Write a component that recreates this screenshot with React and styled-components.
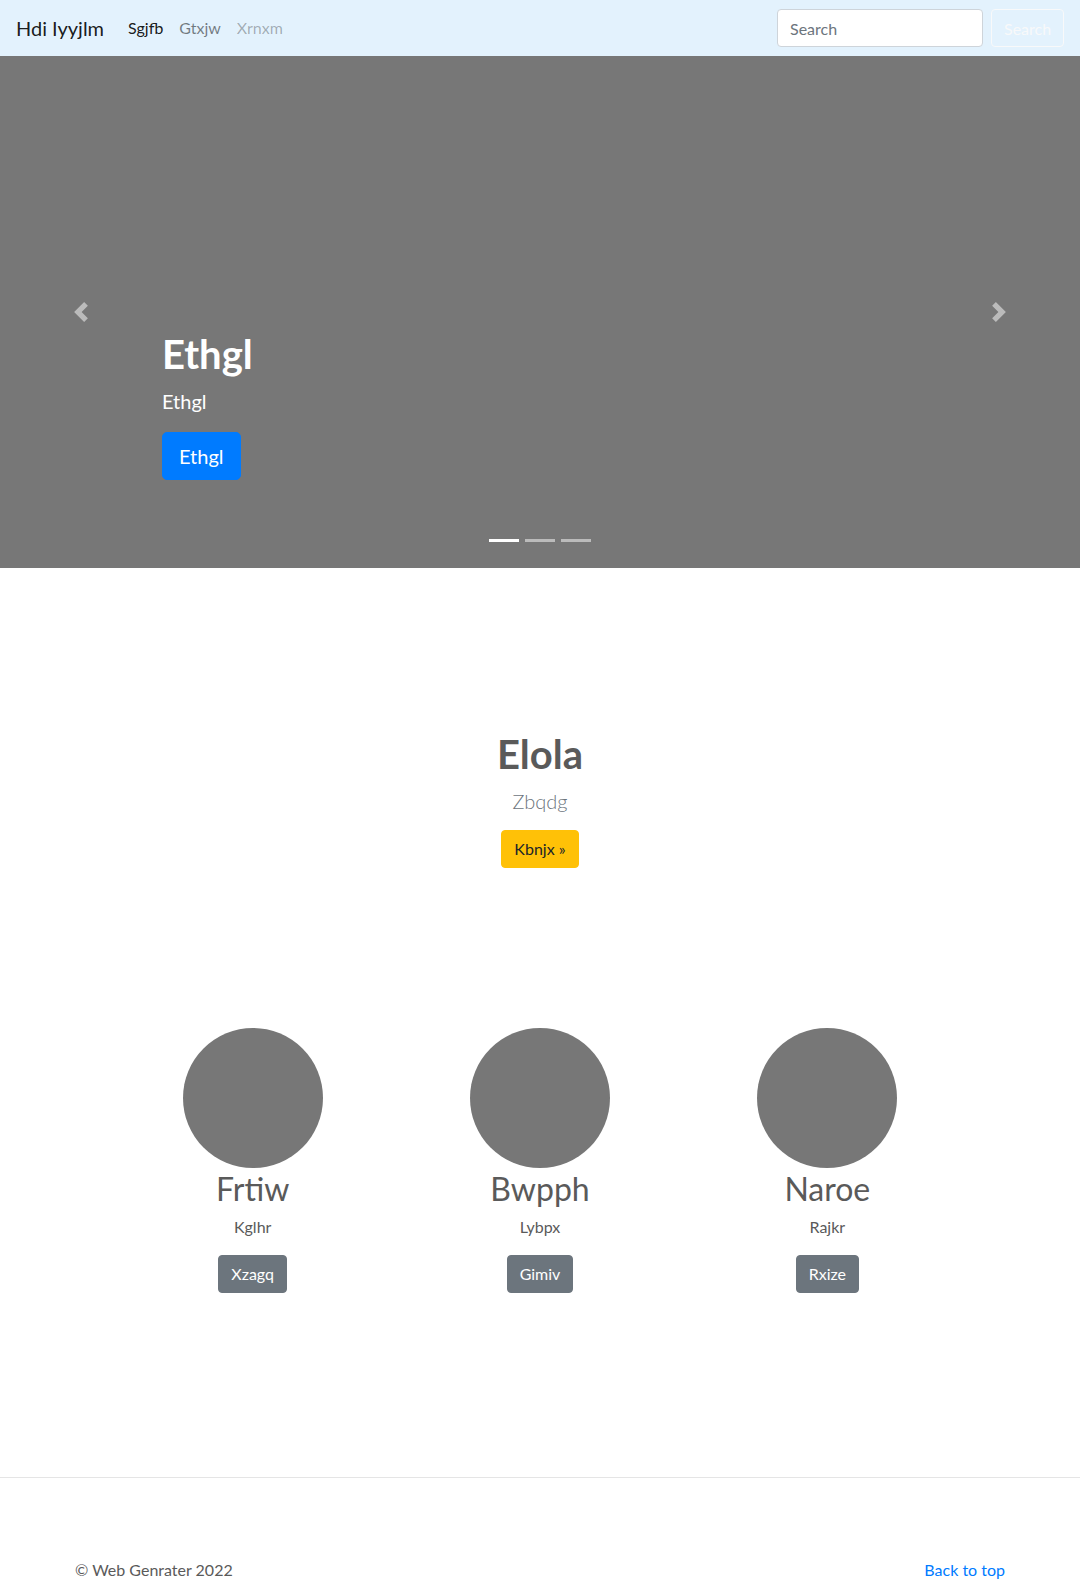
import React from "react";
import styled, { createGlobalStyle } from "styled-components";

const GlobalStyle = createGlobalStyle`
  html, body { margin: 0; padding: 0; }
  body {
    font-family: "Lato", "Open Sans", "Noto Sans", sans-serif;
    font-size: 16px;
    line-height: 1.5;
    color: #5a5a5a;
    background: #fff;
  }
  * { box-sizing: border-box; }
`;

const Navbar = styled.nav`
  height: 56px;
  background: #e3f2fd;
  padding: 8px 16px;
  display: flex;
  align-items: center;
`;

const Brand = styled.a`
  font-size: 20px;
  line-height: 30px;
  padding: 5px 0;
  margin-right: 16px;
  color: rgba(0, 0, 0, 0.9);
  text-decoration: none;
`;

const NavList = styled.div`
  display: flex;
  align-items: center;
`;

const NavLink = styled.a`
  padding: 8px;
  font-size: 16px;
  line-height: 24px;
  text-decoration: none;
  color: ${(p) =>
    p.$state === "active"
      ? "rgba(0,0,0,0.9)"
      : p.$state === "disabled"
      ? "rgba(0,0,0,0.3)"
      : "rgba(0,0,0,0.5)"};
`;

const SearchForm = styled.form`
  margin-left: auto;
  display: flex;
  align-items: center;
  gap: 8px;
`;

const SearchInput = styled.input`
  width: 206px;
  height: 38px;
  padding: 6px 12px;
  font-family: inherit;
  font-size: 16px;
  color: #495057;
  background: #fff;
  border: 1px solid #ced4da;
  border-radius: 4px;
  outline: none;
  &::placeholder { color: #6c757d; }
`;

const OutlineButton = styled.button`
  width: 73px;
  height: 38px;
  padding: 6px 12px;
  font-family: inherit;
  font-size: 16px;
  color: #f8f9fa;
  background: transparent;
  border: 1px solid #f8f9fa;
  border-radius: 4px;
`;

const Carousel = styled.div`
  position: relative;
  height: 512px;
  background: #777;
  overflow: hidden;
`;

const Caption = styled.div`
  position: absolute;
  left: 15%;
  right: 15%;
  bottom: 48px;
  padding: 20px 0 40px;
  color: #fff;
  text-align: left;
`;

const CaptionTitle = styled.h1`
  margin: 0 0 8px;
  font-size: 40px;
  line-height: 1.2;
  font-weight: 700;
`;

const CaptionText = styled.p`
  margin: 0 0 16px;
  font-size: 20px;
  line-height: 1.5;
`;

const PrimaryLgButton = styled.a`
  display: inline-block;
  padding: 8px 16px;
  font-size: 20px;
  line-height: 30px;
  color: #fff;
  background: #007bff;
  border: 1px solid #007bff;
  border-radius: 5px;
  text-decoration: none;
`;

const Control = styled.a`
  position: absolute;
  top: 0;
  bottom: 0;
  ${(p) => (p.$side === "left" ? "left: 0;" : "right: 0;")}
  width: 15%;
  display: flex;
  align-items: center;
  justify-content: center;
  opacity: 0.5;
`;

const Indicators = styled.ol`
  position: absolute;
  left: 15%;
  right: 15%;
  bottom: 26px;
  margin: 0;
  padding: 0;
  list-style: none;
  display: flex;
  justify-content: center;
  gap: 6px;
`;

const Indicator = styled.li`
  width: 30px;
  height: 3px;
  background: #fff;
  opacity: ${(p) => (p.$active ? 1 : 0.5)};
`;

const Intro = styled.section`
  padding-top: 162px;
  text-align: center;
`;

const IntroTitle = styled.h1`
  margin: 0 0 8px;
  font-size: 40px;
  line-height: 1.2;
  font-weight: 700;
  color: #5a5a5a;
`;

const Lead = styled.p`
  margin: 0 0 14px;
  font-size: 20px;
  line-height: 1.5;
  font-weight: 300;
  color: #6c757d;
`;

const Button = styled.a`
  display: inline-block;
  padding: 6px 12px;
  font-size: 16px;
  line-height: 24px;
  border-radius: 4px;
  text-decoration: none;
  border: 1px solid ${(p) => (p.$variant === "warning" ? "#ffc107" : "#6c757d")};
  background: ${(p) => (p.$variant === "warning" ? "#ffc107" : "#6c757d")};
  color: ${(p) => (p.$variant === "warning" ? "#212529" : "#fff")};
`;

const Marketing = styled.section`
  width: 862px;
  margin: 0 auto;
  padding-top: 160px;
  display: grid;
  grid-template-columns: repeat(3, 1fr);
`;

const Feature = styled.div`
  text-align: center;
`;

const Avatar = styled.div`
  width: 140px;
  height: 140px;
  margin: 0 auto;
  border-radius: 50%;
  background: #777;
`;

const FeatureTitle = styled.h2`
  margin: 2px 0 7px;
  font-size: 32px;
  line-height: 1.2;
  font-weight: 400;
`;

const FeatureText = styled.p`
  margin: 0 0 16px;
  font-size: 16px;
  line-height: 24px;
`;

const Divider = styled.hr`
  margin: 184px 0 80px;
  border: 0;
  border-top: 1px solid rgba(0, 0, 0, 0.1);
`;

const Footer = styled.footer`
  max-width: 930px;
  margin: 0 auto;
  display: flex;
  justify-content: space-between;
  line-height: 24px;
`;

const FooterLink = styled.a`
  color: #007bff;
  text-decoration: none;
`;

const ChevronLeft = () => (
  <svg width="20" height="20" viewBox="0 0 8 8" fill="#fff">
    <path d="M5.25 0l-4 4 4 4 1.5-1.5L4.25 4l2.5-2.5L5.25 0z" />
  </svg>
);

const ChevronRight = () => (
  <svg width="20" height="20" viewBox="0 0 8 8" fill="#fff">
    <path d="M2.75 0l-1.5 1.5L3.75 4l-2.5 2.5L2.75 8l4-4-4-4z" />
  </svg>
);

const features = [
  { title: "Frtiw", text: "Kglhr", btn: "Xzagq" },
  { title: "Bwpph", text: "Lybpx", btn: "Gimiv" },
  { title: "Naroe", text: "Rajkr", btn: "Rxize" },
];

export default function App() {
  return (
    <>
      <GlobalStyle />
      <Navbar>
        <Brand href="#">Hdi Iyyjlm</Brand>
        <NavList>
          <NavLink $state="active" href="#">Sgjfb</NavLink>
          <NavLink href="#">Gtxjw</NavLink>
          <NavLink $state="disabled" href="#">Xrnxm</NavLink>
        </NavList>
        <SearchForm onSubmit={(e) => e.preventDefault()}>
          <SearchInput type="search" placeholder="Search" />
          <OutlineButton type="submit">Search</OutlineButton>
        </SearchForm>
      </Navbar>

      <Carousel>
        <Indicators>
          <Indicator $active />
          <Indicator />
          <Indicator />
        </Indicators>
        <Caption>
          <CaptionTitle>Ethgl</CaptionTitle>
          <CaptionText>Ethgl</CaptionText>
          <PrimaryLgButton href="#">Ethgl</PrimaryLgButton>
        </Caption>
        <Control $side="left" href="#">
          <ChevronLeft />
        </Control>
        <Control $side="right" href="#">
          <ChevronRight />
        </Control>
      </Carousel>

      <Intro>
        <IntroTitle>Elola</IntroTitle>
        <Lead>Zbqdg</Lead>
        <Button $variant="warning" href="#">Kbnjx »</Button>
      </Intro>

      <Marketing>
        {features.map((f) => (
          <Feature key={f.title}>
            <Avatar />
            <FeatureTitle>{f.title}</FeatureTitle>
            <FeatureText>{f.text}</FeatureText>
            <Button href="#">{f.btn}</Button>
          </Feature>
        ))}
      </Marketing>

      <Divider />
      <Footer>
        <span>© Web Genrater 2022</span>
        <FooterLink href="#">Back to top</FooterLink>
      </Footer>
    </>
  );
}
